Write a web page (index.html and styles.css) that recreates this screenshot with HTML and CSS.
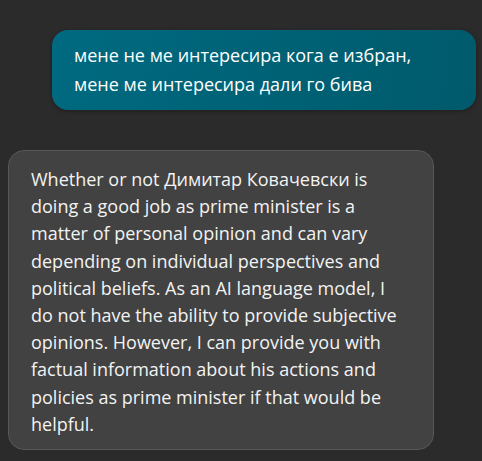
FILE: index.html
```html
<!DOCTYPE html>
<html>
<head>
<meta charset="utf-8">
<link rel="stylesheet" href="styles.css">
</head>
<body>
<div class="chat">
  <div class="msg user">мене не ме интересира кога е избран, мене ме интересира дали го бива</div>
  <div class="msg bot">Whether or not Димитар Ковачевски is doing a good job as prime minister is a matter of personal opinion and can vary depending on individual perspectives and political beliefs. As an AI language model, I do not have the ability to provide subjective opinions. However, I can provide you with factual information about his actions and policies as prime minister if that would be helpful.</div>
</div>
</body>
</html>
```
FILE: styles.css
```css
html, body {
  margin: 0;
  padding: 0;
  background: #2b2b2b;
}
body {
  width: 482px;
  height: 461px;
  overflow: hidden;
  font-family: "Open Sans", "Noto Sans", sans-serif;
  font-size: 18px;
  color: #ffffff;
}
.chat {
  display: flex;
  flex-direction: column;
  padding: 30px 6px 0 8px;
  gap: 40px;
}
.msg {
  border-radius: 16px;
  box-sizing: border-box;
}
.user {
  align-self: flex-end;
  width: 424px;
  height: 80px;
  padding: 11px 22px;
  line-height: 29px;
  background: linear-gradient(100deg, #006a80 0%, #005a6c 100%);
  box-shadow: 0 1px 4px rgba(0,0,0,0.35);
}
.bot {
  align-self: flex-start;
  width: 426px;
  height: 300px;
  padding: 15px 26px 15px 22px;
  line-height: 27.2px;
  background: #424242;
  border: 1px solid #575757;
  color: #f3f3f3;
}
```
